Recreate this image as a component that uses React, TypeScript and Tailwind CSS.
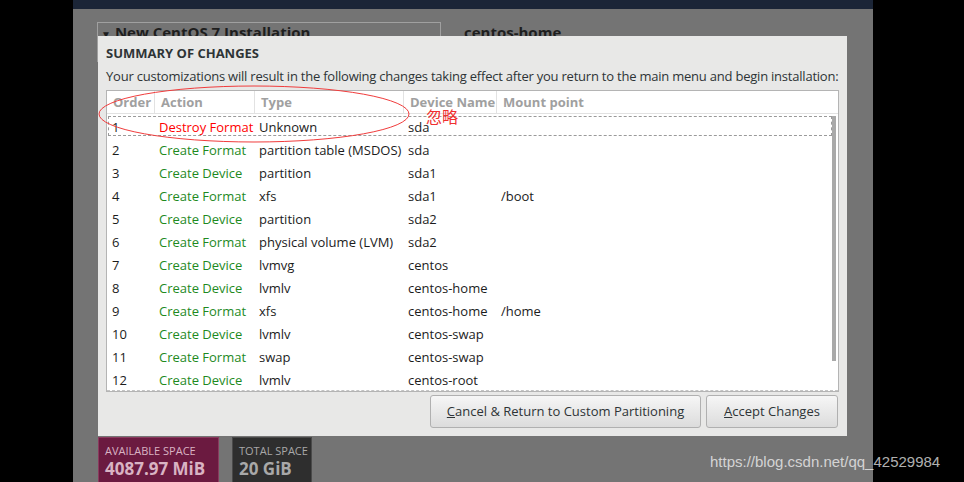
import React from 'react'

const rows = [
  ['1', 'Destroy Format', 'Unknown', 'sda', ''],
  ['2', 'Create Format', 'partition table (MSDOS)', 'sda', ''],
  ['3', 'Create Device', 'partition', 'sda1', ''],
  ['4', 'Create Format', 'xfs', 'sda1', '/boot'],
  ['5', 'Create Device', 'partition', 'sda2', ''],
  ['6', 'Create Format', 'physical volume (LVM)', 'sda2', ''],
  ['7', 'Create Device', 'lvmvg', 'centos', ''],
  ['8', 'Create Device', 'lvmlv', 'centos-home', ''],
  ['9', 'Create Format', 'xfs', 'centos-home', '/home'],
  ['10', 'Create Device', 'lvmlv', 'centos-swap', ''],
  ['11', 'Create Format', 'swap', 'centos-swap', ''],
  ['12', 'Create Device', 'lvmlv', 'centos-root', ''],
]

const headers = ['Order', 'Action', 'Type', 'Device Name', 'Mount point']
const widths = ['w-[48px]', 'w-[100px]', 'w-[149px]', 'w-[93px]', 'flex-1']

export default function App() {
  return (
    <div className="relative w-[964px] h-[482px] bg-black overflow-hidden font-['Open_Sans',sans-serif] whitespace-nowrap">
      {/* background installer panel */}
      <div className="absolute left-[73px] top-0 w-[800px] h-[482px] bg-[#747474] flex flex-col overflow-hidden">
        <div className="h-[9px] bg-[#1b2537]" />
        <div className="flex pl-[24px] pt-[13px]">
          <div className="w-[344px] h-[40px] border border-[#a0a0a0] px-[3px] text-[15px] font-bold text-[#1e1e1e] flex items-start">
            <span className="text-[10px] mt-[4px] mr-[4px]">▼</span>
            <span className="leading-[19px]">New CentOS 7 Installation</span>
          </div>
          <div className="ml-[23px] mt-[1px] text-[15px] font-bold text-[#1e1e1e] leading-[19px]">centos-home</div>
        </div>
        <div className="mt-auto flex gap-[13px] pl-[25px] h-[45px]">
          <div className="w-[121px] h-[50px] bg-[#6b1a40] border border-[#8a3a5e] px-[6px] pt-[6px] text-[#d9b3c3]">
            <div className="text-[11px] leading-[13px]">AVAILABLE SPACE</div>
            <div className="text-[17px] font-bold leading-[22px] mt-[1px]">4087.97 MiB</div>
          </div>
          <div className="w-[80px] h-[50px] bg-[#2e2e2e] border border-[#4a4a4a] px-[6px] pt-[6px] text-[#a8a8a8]">
            <div className="text-[11px] leading-[13px]">TOTAL SPACE</div>
            <div className="text-[17px] font-bold leading-[22px] mt-[1px]">20 GiB</div>
          </div>
        </div>
      </div>

      {/* dialog */}
      <div className="absolute left-[98px] top-[36px] w-[749px] h-[400px] bg-[#e8e8e7] px-[8px] pt-[8px] flex flex-col text-[13px] text-[#1c1c1c]">
        <div className="font-bold text-[#2e3436] leading-[16px] pt-[1px]">SUMMARY OF CHANGES</div>
        <div className="mt-[6px] leading-[16px] text-[#2e3436] tracking-[-0.22px] pt-[1px]">
          Your customizations will result in the following changes taking effect after you return to the main menu and begin installation:
        </div>
        <div className="mt-[6px] w-[733px] h-[302px] bg-white border border-[#b4b4b4] flex flex-col">
          <div className="flex h-[25px] border-b border-[#e2e2e2] font-bold text-[#a0a0a0]">
            {headers.map((h, i) => (
              <div key={h} className={`${widths[i]} ${i < 4 ? 'border-r border-[#e2e2e2]' : ''} px-[6px] pt-[2px] flex items-center`}>
                {h}
              </div>
            ))}
          </div>
          <div className="flex flex-1 pl-[1px] pr-[1px]">
            <div className="flex-1 flex flex-col">
              {rows.map((r, idx) => (
                <div key={r[0]} className="relative flex h-[23px] items-center pt-[4px]">
                  {idx === 0 && (
                    <div className="absolute inset-x-0 top-[2px] bottom-[1px] border border-dashed border-[#9a9a9a]" />
                  )}
                  <div className="w-[47px] pl-[4px]">{r[0]}</div>
                  <div className={`w-[100px] pl-[4px] ${idx === 0 ? 'text-[#ff0000]' : 'text-[#1e8a1e]'}`}>{r[1]}</div>
                  <div className="w-[149px] pl-[4px]">{r[2]}</div>
                  <div className="w-[93px] pl-[4px]">{r[3]}</div>
                  <div className="flex-1 pl-[4px]">{r[4]}</div>
                </div>
              ))}
            </div>
            <div className="w-[4px] h-[245px] mt-[2px] bg-[#a9a9a9] mr-[1px]" />
          </div>
          <div className="border-b border-dashed border-[#c4c4c4]" />
        </div>
        <div className="flex justify-end gap-[5px] mt-[3px] pr-[1px]">
          <button className="w-[271px] h-[33px] rounded-[3px] border border-[#b0b0b0] bg-gradient-to-b from-[#f6f6f6] to-[#dcdcdc] text-[#2e3436]">
            <span className="underline">C</span>ancel &amp; Return to Custom Partitioning
          </button>
          <button className="w-[132px] h-[33px] rounded-[3px] border border-[#b0b0b0] bg-gradient-to-b from-[#f6f6f6] to-[#dcdcdc] text-[#2e3436]">
            <span className="underline">A</span>ccept Changes
          </button>
        </div>
      </div>

      {/* annotation */}
      <svg className="absolute left-0 top-0" width="964" height="482">
        <ellipse cx="254" cy="114" rx="155" ry="28" fill="none" stroke="#f03c3c" strokeWidth="1" />
      </svg>
      <div className="absolute left-[426px] top-[106px] text-[16px] leading-[20px] text-[#f03030] font-['Noto_Sans_CJK_SC',sans-serif]">
        忽略
      </div>

      {/* watermark */}
      <div className="absolute left-[710px] top-[453px] text-[15px] leading-[18px] text-white/70 font-['Liberation_Sans',sans-serif]">
        https://blog.csdn.net/qq_42529984
      </div>
    </div>
  )
}
